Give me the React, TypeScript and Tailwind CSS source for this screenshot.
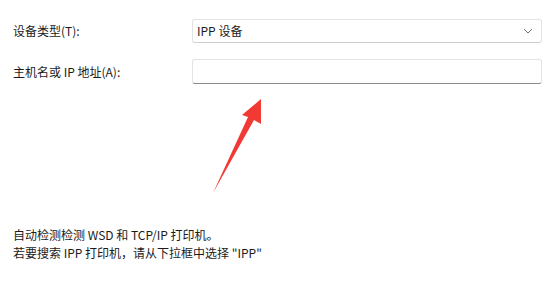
export default function App() {
  return (
    <div
      className="relative flex h-[293px] w-[555px] flex-col bg-white pl-[13px] pt-[19px] text-[12px] text-[#1b1b1b]"
      style={{ fontFamily: '"Noto Sans CJK SC", "Microsoft YaHei", sans-serif' }}
    >
      <div className="flex items-center">
        <div className="w-[179px]">设备类型(T):</div>
        <div className="flex h-[24px] w-[350px] items-center justify-between rounded-[3px] border border-[#e3e3e3] border-b-[#cfcfcf] bg-white pl-[4px] pr-[8px]">
          <span>IPP 设备</span>
          <svg width="10" height="6" viewBox="0 0 10 6" fill="none">
            <path d="M1 1 L5 5 L9 1" stroke="#6a6a6a" strokeWidth="1" />
          </svg>
        </div>
      </div>
      <div className="mt-[16px] flex items-center">
        <div className="w-[179px]">主机名或 IP 地址(A):</div>
        <div className="h-[25px] w-[350px] rounded-[3px] border border-[#e3e3e3] border-b-[#8a8a8a] bg-white" />
      </div>

      <div className="mt-auto pb-[31px] leading-[18px]">
        <div>自动检测检测 WSD 和 TCP/IP 打印机。</div>
        <div>若要搜索 IPP 打印机，请从下拉框中选择 "IPP"</div>
      </div>

      {/* annotation arrow */}
      <svg className="absolute left-0 top-0" width="555" height="293" viewBox="0 0 555 293">
        <polygon
          points="261,99 242,115 248,117 213,193 254,120 261,124"
          fill="#f23a35"
        />
      </svg>
    </div>
  );
}
